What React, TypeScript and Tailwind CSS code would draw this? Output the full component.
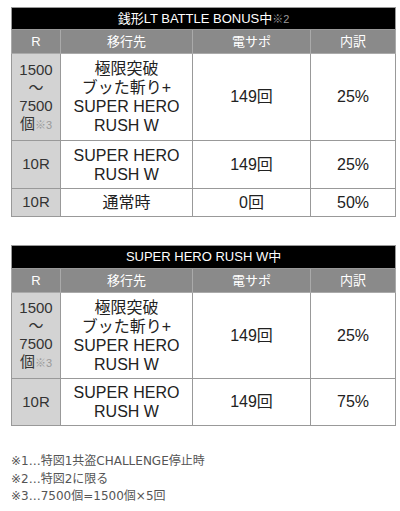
import React from 'react';

type Row = { r: React.ReactNode; dest: React.ReactNode; den: string; pct: string; h: string };

const font = { fontFamily: '"Liberation Sans", "Noto Sans CJK JP", sans-serif' };
const noteFont = { fontFamily: '"DejaVu Sans", "Noto Sans CJK JP", sans-serif' };

const Note = ({ children }: { children: React.ReactNode }) => (
    <span className="text-[11px] text-[#999]">{children}</span>
);

const bigR = (
    <div className="leading-[18px]">
        1500<br />～<br />7500<br />個<Note>※3</Note>
    </div>
);

const bigDest = (
    <div className="leading-[19px]">
        極限突破<br />ブッた斬り+<br />SUPER HERO<br />RUSH W
    </div>
);

const rushDest = (
    <div className="leading-[19px]">
        SUPER HERO<br />RUSH W
    </div>
);

const BonusTable = ({ title, rows, titleH }: { title: React.ReactNode; rows: Row[]; titleH: string }) => (
    <table className="w-[384px] table-fixed border-collapse">
        <colgroup>
            <col className="w-[49px]" />
            <col className="w-[132px]" />
            <col className="w-[118px]" />
            <col className="w-[85px]" />
        </colgroup>
        <thead>
            <tr className={titleH}>
                <th colSpan={4} className="bg-black text-white text-[13px] font-normal border border-[#999] p-0">
                    {title}
                </th>
            </tr>
            <tr className="h-[24px]">
                {['R', '移行先', '電サポ', '内訳'].map(t => (
                    <th key={t} className="bg-[#8a8a8a] text-white text-[13px] font-normal border border-[#aaa] p-0">
                        {t}
                    </th>
                ))}
            </tr>
        </thead>
        <tbody>
            {rows.map((row, i) => (
                <tr key={i} className={row.h}>
                    <td className="bg-[#d3d3d3] text-[#333] text-[15px] text-center border border-[#999] p-0">{row.r}</td>
                    <td className="bg-white text-[#222] text-[16px] text-center border border-[#999] p-0">{row.dest}</td>
                    <td className="bg-white text-[#222] text-[16px] text-center border border-[#999] p-0">{row.den}</td>
                    <td className="bg-white text-[#222] text-[16px] text-center border border-[#999] p-0">{row.pct}</td>
                </tr>
            ))}
        </tbody>
    </table>
);

export default function App() {
    return (
        <div className="w-[400px] h-[511px] bg-white pl-[11px] pt-[7px]" style={font}>
            <BonusTable
                titleH="h-[22px]"
                title={<>銭形LT BATTLE BONUS中<Note>※2</Note></>}
                rows={[
                    { r: bigR, dest: bigDest, den: '149回', pct: '25%', h: 'h-[87px]' },
                    { r: '10R', dest: rushDest, den: '149回', pct: '25%', h: 'h-[48px]' },
                    { r: '10R', dest: '通常時', den: '0回', pct: '50%', h: 'h-[28px]' },
                ]}
            />
            <div className="h-[28px]" />
            <BonusTable
                titleH="h-[23px]"
                title="SUPER HERO RUSH W中"
                rows={[
                    { r: bigR, dest: bigDest, den: '149回', pct: '25%', h: 'h-[86px]' },
                    { r: '10R', dest: rushDest, den: '149回', pct: '75%', h: 'h-[47px]' },
                ]}
            />
            <div className="mt-[27px] text-[12px] leading-[17.5px] text-[#555]" style={noteFont}>
                <p>※1…特図1共盗CHALLENGE停止時</p>
                <p>※2…特図2に限る</p>
                <p>※3…7500個=1500個×5回</p>
            </div>
        </div>
    );
}
